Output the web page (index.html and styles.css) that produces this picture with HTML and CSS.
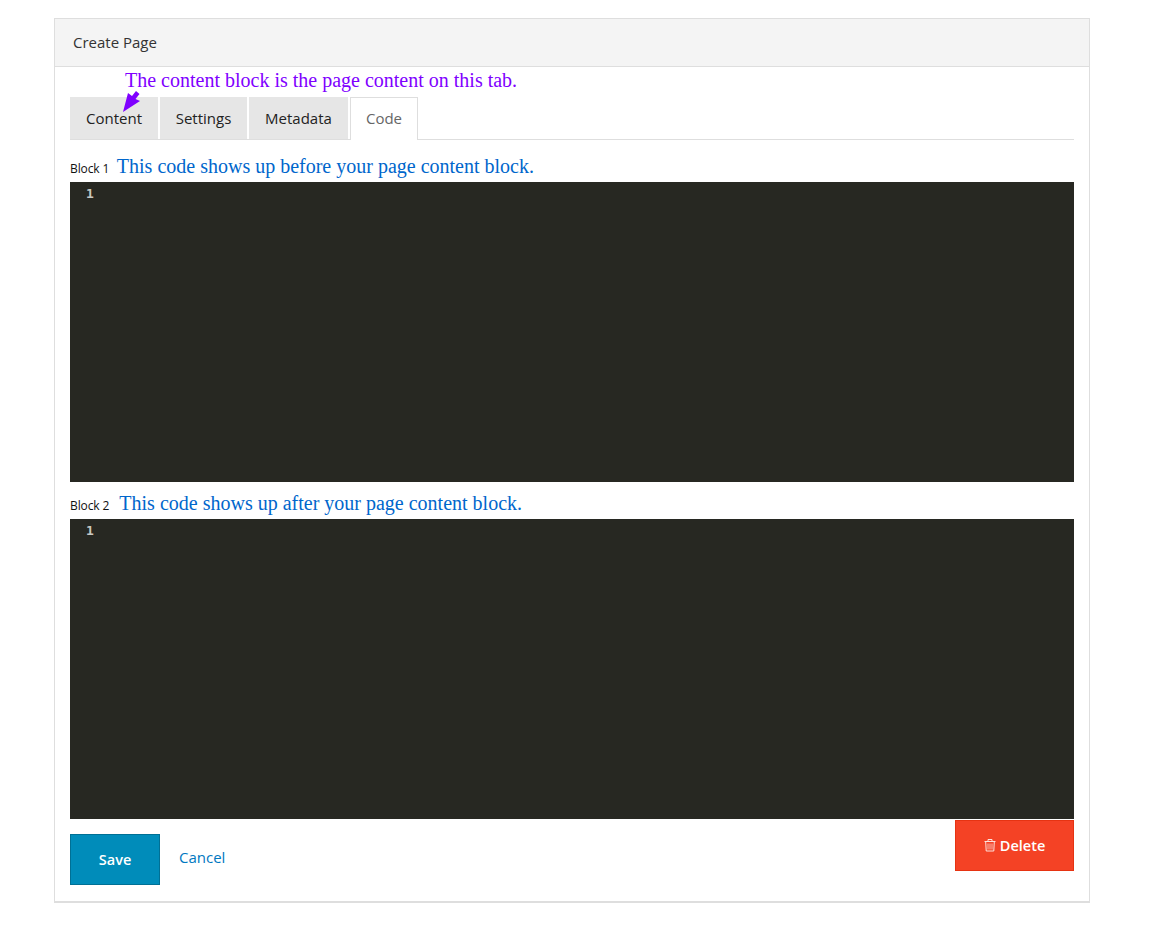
FILE: index.html
```html
<!DOCTYPE html>
<html lang="en">
<head>
<meta charset="utf-8">
<title>Create Page</title>
<link rel="stylesheet" href="styles.css">
</head>
<body>
<section class="panel">
  <header class="panel-head">Create Page</header>
  <div class="panel-body">
    <div class="tab-area">
      <p class="note-purple">The content block is the page content on this tab.</p>
      <svg class="arrow" width="22" height="26" viewBox="0 0 22 26"><path d="M3 24 L8 5 L12 8 L16 3 L19.5 6 L15.5 11 L20 13 Z" fill="#7f00ff"/></svg>
      <ul class="tabs">
        <li class="tab tab-content">Content</li>
        <li class="tab tab-settings">Settings</li>
        <li class="tab tab-metadata">Metadata</li>
        <li class="tab tab-active">Code</li>
      </ul>
    </div>
    <div class="block block-first">
      <div class="block-label"><span class="label-text">Block 1</span><span class="note-blue note-one">This code shows up before your page content block.</span></div>
      <div class="editor"><span class="line-no">1</span></div>
    </div>
    <div class="block block-second">
      <div class="block-label"><span class="label-text">Block 2</span><span class="note-blue note-two">This code shows up after your page content block.</span></div>
      <div class="editor"><span class="line-no">1</span></div>
    </div>
    <footer class="actions">
      <button class="btn btn-save" type="button">Save</button>
      <a class="cancel" href="#">Cancel</a>
      <button class="btn btn-delete" type="button">
        <svg class="trash" width="12" height="14" viewBox="0 0 12 14" fill="none" stroke="#fff" stroke-width="1"><path d="M0.5 3.5H11.5M4 3V1.5H8V3M1.7 3.5L2.2 13H9.8L10.3 3.5"/><path d="M4 5.5V11.5M6 5.5V11.5M8 5.5V11.5" opacity=".75"/></svg>
        <span class="delete-text">Delete</span>
      </button>
    </footer>
  </div>
</section>
</body>
</html>
```
FILE: styles.css
```css
* { box-sizing: border-box; }
html, body { margin: 0; padding: 0; background: #fff; }
body {
  height: 938px;
  overflow: hidden;
  padding: 18px 60px 0 54px;
  font-family: "Open Sans", sans-serif;
  color: #222;
}
.panel {
  height: 885px;
  border: 1px solid #dedede;
  border-bottom-width: 2px;
}
.panel-head {
  height: 48px;
  padding: 0 18px 2px;
  display: flex;
  align-items: center;
  background: #f4f4f4;
  border-bottom: 1px solid #dedede;
  font-size: 15px;
  color: #333;
}
.panel-body { padding: 0 15px; }
.tab-area { position: relative; padding-top: 30px; }
.note-purple {
  position: absolute;
  left: 55px;
  top: 1px;
  margin: 0;
  font: 20px/24px "Liberation Serif", serif;
  color: #7f00ff;
  white-space: nowrap;
}
.arrow { position: absolute; left: 50px; top: 21px; z-index: 1; }
.tabs {
  display: flex;
  margin: 0;
  padding: 0;
  height: 43px;
  list-style: none;
  border-bottom: 1px solid #dedede;
}
.tab {
  height: 42px;
  margin-right: 2px;
  display: flex;
  align-items: center;
  justify-content: center;
  background: #e6e6e6;
  font-size: 15px;
  color: #222;
}
.tab-content { width: 88px; }
.tab-settings { width: 87px; }
.tab-metadata { width: 99px; }
.tab-active {
  width: 68px;
  height: 43px;
  padding-bottom: 3px;
  background: #fff;
  border: 1px solid #dedede;
  border-bottom: 0;
  color: #666;
}
.block-first { margin-top: 14px; }
.block-second { margin-top: 9px; }
.block-label {
  height: 28px;
  display: flex;
  align-items: center;
}
.label-text { font-size: 12px; color: #111; letter-spacing: -.1px; }
.note-blue {
  position: relative;
  top: -2px;
  font: 20px/24px "Liberation Serif", serif;
  color: #0066cc;
  white-space: nowrap;
}
.note-one { margin-left: 7.5px; }
.note-two { margin-left: 10px; }
.editor {
  height: 300px;
  background: #272822;
  padding: 3px 0 0 16px;
}
.line-no {
  display: block;
  font: bold 13px/18px "DejaVu Sans Mono", monospace;
  color: #c8c8c4;
}
.actions {
  display: flex;
  align-items: flex-start;
}
.btn {
  font-family: "Open Sans", sans-serif;
  font-size: 14.5px;
  font-weight: 600;
  color: #fff;
  cursor: pointer;
  height: 51px;
  padding: 0 0 1px;
}
.btn-save {
  width: 90px;
  margin-top: 15px;
  background: #008cba;
  border: 1px solid #007095;
}
.cancel {
  margin: 28px 0 0 19px;
  font-size: 15px;
  line-height: 20px;
  color: #0078c1;
  text-decoration: none;
}
.btn-delete {
  width: 119px;
  margin: 1px 0 0 auto;
  background: #f44225;
  border: 1px solid #e63312;
  display: flex;
  align-items: center;
  justify-content: center;
  gap: 4px;
}
.trash { opacity: .85; }
```
